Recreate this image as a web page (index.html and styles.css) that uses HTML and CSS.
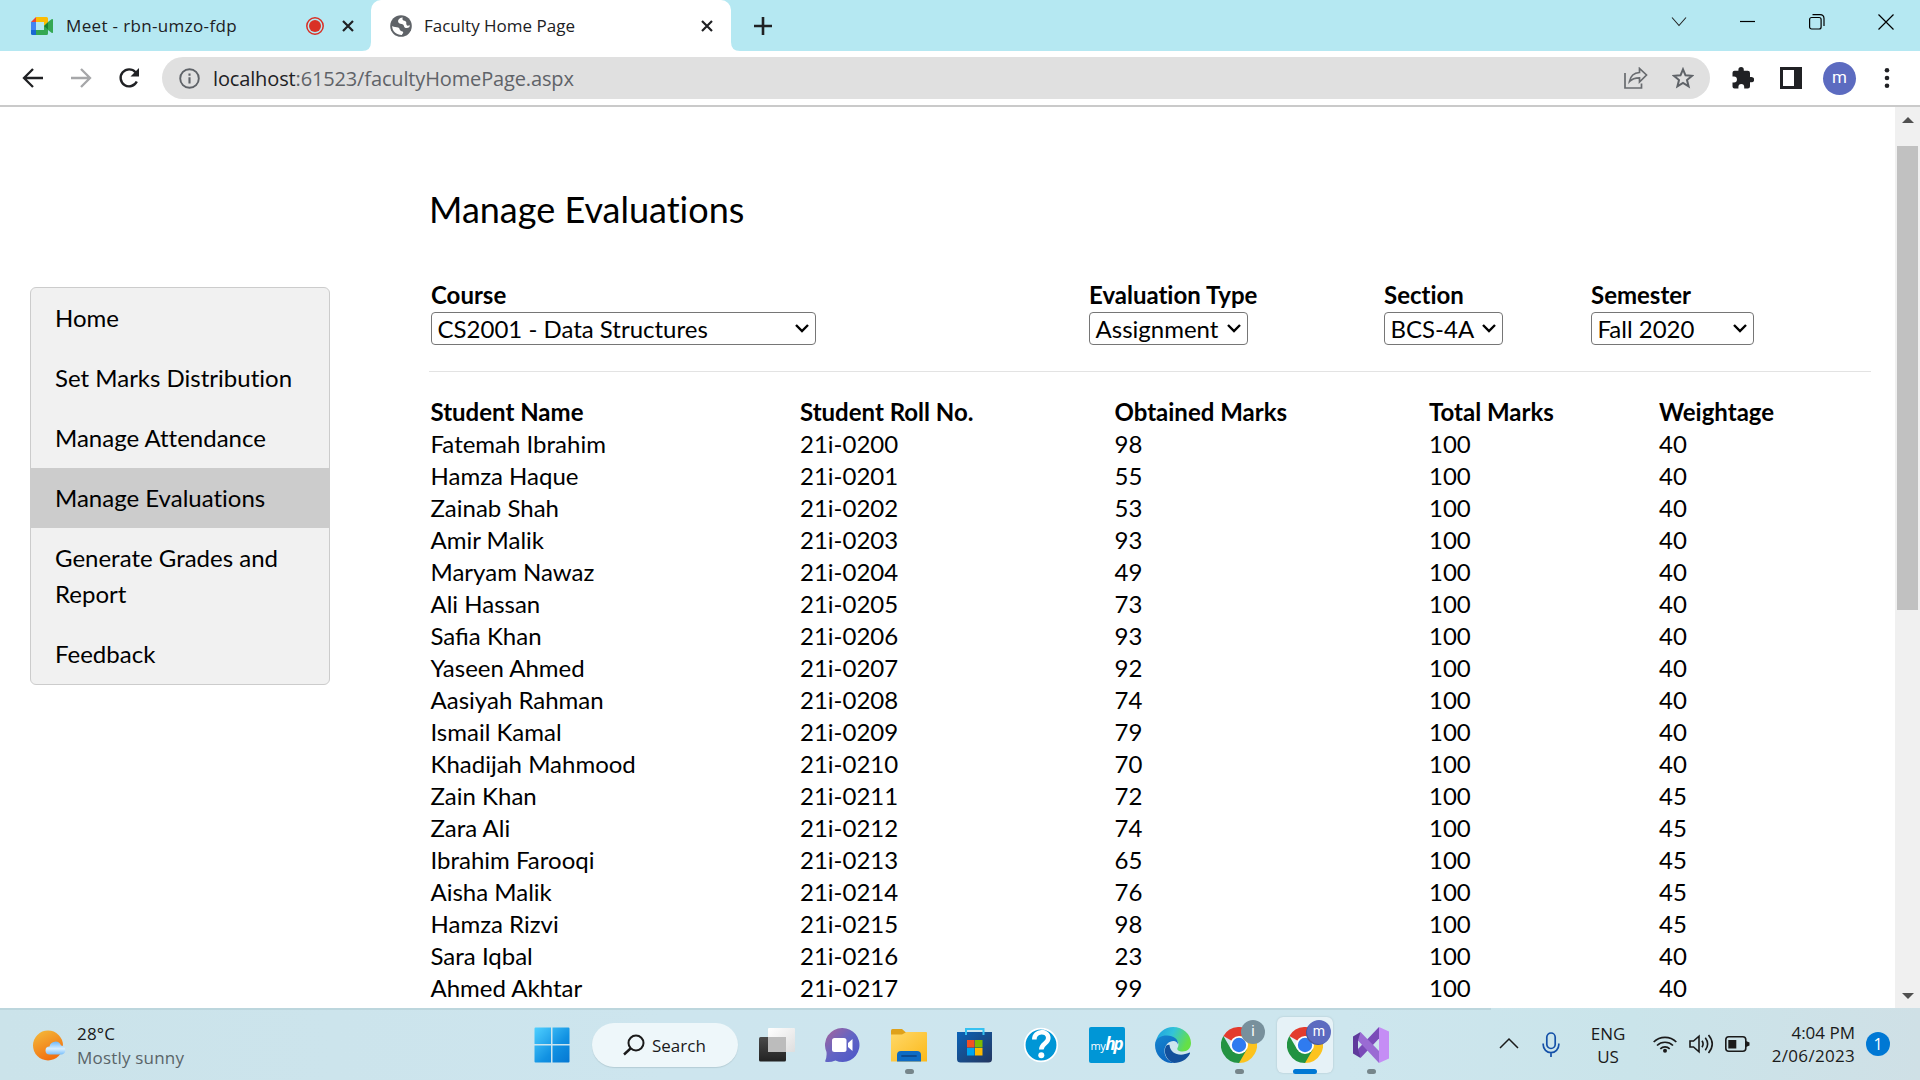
FILE: index.html
```html
<!DOCTYPE html>
<html lang="en">
<head>
<meta charset="utf-8">
<title>Faculty Home Page</title>
<link rel="stylesheet" href="styles.css">
</head>
<body>
<header class="tabstrip">
  <div class="tab tab-idle">
    <svg class="meet" width="22" height="18" viewBox="0 0 22 18"><path d="M0 5 5 0v5z" fill="#ea4335"/><path d="M5 0h10.500q1.500 0 1.500 1.500V7l-4 2V5H5z" fill="#fbbc04"/><path d="M0 5h5v8H0z" fill="#4285f4"/><path d="M0 13h5v5H1.500Q0 18 0 16.500z" fill="#1967d2"/><path d="M5 13h8V9l4-4v11.500q0 1.500-1.500 1.500H5z" fill="#34a853"/><path d="M17 5l3.500-2.800q1.500-.8 1.500.5v12.600q0 1.300-1.500.5L17 13z" fill="#34a853"/><path d="M13 9l4-3.500v7z" fill="#188038"/></svg>
    <span class="tab-title meet-title">Meet - rbn-umzo-fdp</span>
    <svg class="rec" width="18" height="18" viewBox="0 0 18 18"><circle cx="9" cy="9" r="8.200" fill="none" stroke="#d93025" stroke-width="1.500"/><circle cx="9" cy="9" r="6" fill="#d93025"/></svg>
    <svg class="tab-x" width="12" height="12" viewBox="0 0 12 12"><path d="M1 1l10 10M11 1L1 11" stroke="#202124" stroke-width="2.200"/></svg>
  </div>
  <div class="tab tab-active">
    <svg class="foot foot-left" width="9" height="9" viewBox="0 0 9 9"><path d="M9 0v9H0Q9 9 9 0z" fill="#fff"/></svg>
    <svg class="foot foot-right" width="9" height="9" viewBox="0 0 9 9"><path d="M0 0v9h9Q0 9 0 0z" fill="#fff"/></svg>
    <svg width="22" height="22" viewBox="0 0 22 22"><circle cx="11" cy="11" r="10.800" fill="#5f6368"/><path d="M12.500 2.300C9.500 3.200 7.500 5 8.300 7.200c.7 1.800 3.200 1.500 4.700 2.300 1.300.8.700 2.700 2 3.200 1.500.6 3.200.3 4.500-.7l.2-2c-1.200 1-2.700 1-3.200-.2-.7-1.600.5-2.500-1-3.500-1.200-.8-3-.8-3-2zM2.200 11c2 1.500 4 .8 6 1.500 2 .8 1 2.500 2.500 3.300 1.300.6 2.500.7 2.500 1.700 0 1-1.200 1.500-1.200 2.500C7 20.200 2 16.500 2.200 11z" fill="#fff"/></svg>
    <span class="tab-title page-title">Faculty Home Page</span>
    <svg class="tab-x" width="12" height="12" viewBox="0 0 12 12"><path d="M1 1l10 10M11 1L1 11" stroke="#202124" stroke-width="2.200"/></svg>
  </div>
  <svg class="newtab" width="18" height="18" viewBox="0 0 18 18"><path d="M9 0v18M0 9h18" stroke="#202124" stroke-width="2.600"/></svg>
  <div class="winctl">
    <svg width="16" height="16" viewBox="0 0 16 16"><path d="M1 3.500l7 8 7-8" fill="none" stroke="#222" stroke-width="1.100"/></svg>
    <svg width="16" height="16" viewBox="0 0 16 16"><path d="M0 7.500h15" stroke="#000" stroke-width="1.200"/></svg>
    <svg width="16" height="16" viewBox="0 0 16 16"><rect x=".6" y="3.500" width="11.500" height="11.500" rx="2" fill="none" stroke="#000" stroke-width="1.200"/><path d="M3.500.6h7.500q4 0 4 4V12" fill="none" stroke="#000" stroke-width="1.200"/></svg>
    <svg width="16" height="16" viewBox="0 0 16 16"><path d="M.5.5l15 15M15.500.5l-15 15" stroke="#000" stroke-width="1.200"/></svg>
  </div>
</header>

<nav class="toolbar">
  <svg class="nav-ico" width="22" height="22" viewBox="0 0 22 22"><path d="M21 11H2.500M11 2l-9 9 9 9" fill="none" stroke="#202124" stroke-width="2.300"/></svg>
  <svg class="nav-ico" width="22" height="22" viewBox="0 0 22 22"><path d="M1 11h18.500M11 2l9 9-9 9" fill="none" stroke="#a6a7a9" stroke-width="2.300"/></svg>
  <svg class="nav-ico" width="22" height="22" viewBox="0 0 22 22"><path d="M18.800 14.500A8.500 8.500 0 1 1 17.500 5.200" fill="none" stroke="#202124" stroke-width="2.400"/><path d="M21 1v8.500h-8.500z" fill="#202124"/></svg>
  <div class="omnibox">
    <svg class="info" width="21" height="21" viewBox="0 0 21 21"><circle cx="10.500" cy="10.500" r="9.300" fill="none" stroke="#5f6368" stroke-width="1.900"/><path d="M10.500 9.200v6.300M10.500 5.500v2.200" stroke="#5f6368" stroke-width="2.100"/></svg>
    <span class="url"><span class="host">localhost</span>:61523/facultyHomePage.aspx</span>
    <svg class="share" width="24" height="22" viewBox="0 0 24 22"><path d="M1 6v15h16.500v-4.500" fill="none" stroke="#686b6f" stroke-width="1.700"/><path d="M5.500 14.500C6.500 9 10 5.800 15.500 5.500V1.500L22.500 8l-7 7v-4.200c-4 0-7.500 1-10 3.700z" fill="none" stroke="#686b6f" stroke-width="1.700"/></svg>
    <svg class="star" width="22" height="22" viewBox="0 0 22 22"><path d="M11 2.300l2.500 6 6.500.5-5 4.200 1.600 6.400L11 16l-5.600 3.400L7 13 2 8.800l6.500-.5z" fill="none" stroke="#5f6368" stroke-width="2"/></svg>
  </div>
  <svg class="puzzle" width="22" height="22" viewBox="0 0 22 22"><path d="M19.500 10H18V6q0-2.200-2.200-2.200h-4V2.700a2.700 2.700 0 0 0-5.400 0v1.100H2.500Q.5 3.800.5 5.800v3.800H2a2.900 2.900 0 0 1 0 5.900H.5v4Q.5 21.500 2.500 21.500h3.900V20a2.900 2.900 0 0 1 5.800 0v1.500h3.600q2.200 0 2.200-2.200v-4h1.500a2.650 2.650 0 0 0 0-5.300z" fill="#202124"/></svg>
  <svg class="panel" width="22" height="22" viewBox="0 0 22 22"><rect x="1.500" y="1.500" width="19" height="19" fill="#fff" stroke="#202124" stroke-width="3"/><path d="M14 1h7v20h-7z" fill="#202124"/></svg>
  <span class="avatar">m</span>
  <svg class="dots" width="6" height="22" viewBox="0 0 6 22"><g fill="#202124"><circle cx="3" cy="3.300" r="2.300"/><circle cx="3" cy="11" r="2.300"/><circle cx="3" cy="18.700" r="2.300"/></g></svg>
</nav>

<div class="viewport">
  <aside class="sidebar">
    <a class="side-link">Home</a>
    <a class="side-link">Set Marks Distribution</a>
    <a class="side-link">Manage Attendance</a>
    <a class="side-link current">Manage Evaluations</a>
    <a class="side-link">Generate Grades and Report</a>
    <a class="side-link">Feedback</a>
  </aside>
  <main class="main">
    <h1 class="heading">Manage Evaluations</h1>
    <div class="filters">
      <div class="field"><label>Course</label><div class="select w-course">CS2001 - Data Structures<svg width="14" height="9" viewBox="0 0 14 9"><path d="M1 1l6 6 6-6" fill="none" stroke="#000" stroke-width="2.400"/></svg></div></div>
      <div class="field"><label>Evaluation Type</label><div class="select w-type">Assignment<svg width="14" height="9" viewBox="0 0 14 9"><path d="M1 1l6 6 6-6" fill="none" stroke="#000" stroke-width="2.400"/></svg></div></div>
      <div class="field"><label>Section</label><div class="select w-section">BCS-4A<svg width="14" height="9" viewBox="0 0 14 9"><path d="M1 1l6 6 6-6" fill="none" stroke="#000" stroke-width="2.400"/></svg></div></div>
      <div class="field"><label>Semester</label><div class="select w-semester">Fall 2020<svg width="14" height="9" viewBox="0 0 14 9"><path d="M1 1l6 6 6-6" fill="none" stroke="#000" stroke-width="2.400"/></svg></div></div>
    </div>
    <hr class="rule">
    <table class="marks">
      <colgroup><col class="c1"><col class="c2"><col class="c3"><col class="c4"><col class="c5"></colgroup>
      <thead><tr><th>Student Name</th><th>Student Roll No.</th><th>Obtained Marks</th><th>Total Marks</th><th>Weightage</th></tr></thead>
      <tbody>
        <tr><td>Fatemah Ibrahim</td><td>21i-0200</td><td>98</td><td>100</td><td>40</td></tr>
        <tr><td>Hamza Haque</td><td>21i-0201</td><td>55</td><td>100</td><td>40</td></tr>
        <tr><td>Zainab Shah</td><td>21i-0202</td><td>53</td><td>100</td><td>40</td></tr>
        <tr><td>Amir Malik</td><td>21i-0203</td><td>93</td><td>100</td><td>40</td></tr>
        <tr><td>Maryam Nawaz</td><td>21i-0204</td><td>49</td><td>100</td><td>40</td></tr>
        <tr><td>Ali Hassan</td><td>21i-0205</td><td>73</td><td>100</td><td>40</td></tr>
        <tr><td class="lig">Safia Khan</td><td>21i-0206</td><td>93</td><td>100</td><td>40</td></tr>
        <tr><td>Yaseen Ahmed</td><td>21i-0207</td><td>92</td><td>100</td><td>40</td></tr>
        <tr><td>Aasiyah Rahman</td><td>21i-0208</td><td>74</td><td>100</td><td>40</td></tr>
        <tr><td>Ismail Kamal</td><td>21i-0209</td><td>79</td><td>100</td><td>40</td></tr>
        <tr><td>Khadijah Mahmood</td><td>21i-0210</td><td>70</td><td>100</td><td>40</td></tr>
        <tr><td>Zain Khan</td><td>21i-0211</td><td>72</td><td>100</td><td>45</td></tr>
        <tr><td>Zara Ali</td><td>21i-0212</td><td>74</td><td>100</td><td>45</td></tr>
        <tr><td>Ibrahim Farooqi</td><td>21i-0213</td><td>65</td><td>100</td><td>45</td></tr>
        <tr><td>Aisha Malik</td><td>21i-0214</td><td>76</td><td>100</td><td>45</td></tr>
        <tr><td>Hamza Rizvi</td><td>21i-0215</td><td>98</td><td>100</td><td>45</td></tr>
        <tr><td>Sara Iqbal</td><td>21i-0216</td><td>23</td><td>100</td><td>40</td></tr>
        <tr><td>Ahmed Akhtar</td><td>21i-0217</td><td>99</td><td>100</td><td>40</td></tr>
      </tbody>
    </table>
  </main>
  <div class="scrollbar">
    <svg width="12" height="6" viewBox="0 0 12 6"><path d="M0 6l6-6 6 6z" fill="#505050"/></svg>
    <div class="thumb"></div>
    <svg width="12" height="6" viewBox="0 0 12 6"><path d="M0 0l6 6 6-6z" fill="#505050"/></svg>
  </div>
</div>

<footer class="taskbar">
  <div class="weather">
    <svg width="34" height="32" viewBox="0 0 34 32"><defs><linearGradient id="sun" x1="0" y1="0" x2=".5" y2="1"><stop offset="0" stop-color="#f4bd3d"/><stop offset="1" stop-color="#f2700f"/></linearGradient><linearGradient id="cld" x1="0" y1="0" x2="0" y2="1"><stop offset="0" stop-color="#6fb9f8"/><stop offset=".55" stop-color="#d8efff"/><stop offset="1" stop-color="#7cc0fa"/></linearGradient></defs><circle cx="15" cy="15.500" r="15" fill="url(#sun)"/><path d="M16.500 24.500a4 4 0 0 1 0-8 6 6 0 0 1 11.500-1 4.600 4.600 0 0 1 1 9z" fill="url(#cld)"/></svg>
    <div class="weather-text"><span>28°C</span><span class="muted">Mostly sunny</span></div>
  </div>
  <div class="apps">
    <svg class="start" width="36" height="36" viewBox="0 0 36 36"><defs><linearGradient id="win" x1="0" y1="0" x2="1" y2="1"><stop offset="0" stop-color="#4fd0ff"/><stop offset=".6" stop-color="#1191e2"/><stop offset="1" stop-color="#0577d2"/></linearGradient></defs><path d="M1.500.5H17v16.500H.5V1.500q0-1 1-1zM18.500.5h16q1 0 1 1V17h-17zM.5 18.500H17v17H1.500q-1 0-1-1zM18.500 18.500h17v16q0 1-1 1h-16z" fill="url(#win)"/></svg>
    <div class="search"><svg width="22" height="22" viewBox="0 0 22 22"><circle cx="13" cy="9" r="7.500" fill="none" stroke="#1a1a1a" stroke-width="2"/><path d="M7.500 14.500L1 20.500" stroke="#1a1a1a" stroke-width="2.400"/></svg><span>Search</span></div>
    <div class="app"><svg width="36" height="36" viewBox="0 0 36 36"><defs><linearGradient id="tv1" x1="0" y1="0" x2="0" y2="1"><stop offset="0" stop-color="#4a4a4a"/><stop offset="1" stop-color="#222"/></linearGradient><linearGradient id="tv2" x1="0" y1="0" x2="1" y2="1"><stop offset="0" stop-color="#fff"/><stop offset="1" stop-color="#dedede"/></linearGradient></defs><rect x="0" y="10" width="27" height="24.500" rx="1.500" fill="url(#tv1)"/><rect x="9" y="1" width="27" height="24" rx="1" fill="url(#tv2)"/><path d="M9 10h18v15H9z" fill="#bcbcbc"/></svg></div>
    <div class="app"><svg width="36" height="36" viewBox="0 0 36 36"><defs><linearGradient id="chat" x1="0" y1="0" x2="1" y2="1"><stop offset="0" stop-color="#a9649a"/><stop offset=".5" stop-color="#6264c4"/><stop offset="1" stop-color="#4a55c8"/></linearGradient></defs><path d="M17.500 1a17 17 0 1 1-7 32.500Q4 36 0 34.500q2-4 1.500-9.500A17 17 0 0 1 17.500 1z" fill="url(#chat)"/><rect x="7" y="11" width="14.500" height="14" rx="2.500" fill="#fff"/><path d="M23 16l4.500-4v12L23 20z" fill="#fff"/></svg></div>
    <div class="app"><svg width="36" height="36" viewBox="0 0 36 36"><defs><linearGradient id="fold" x1="0" y1="0" x2="1" y2="1"><stop offset="0" stop-color="#ffd869"/><stop offset="1" stop-color="#fbb91a"/></linearGradient></defs><path d="M0 3.500Q0 2 1.500 2H11l4.500 4v4H0z" fill="#dfa11a"/><path d="M0 7.500h11L15.500 5H35q1 0 1 1v28.500H0z" fill="url(#fold)"/><path d="M6 34.500V28q0-4 4-4h16q4 0 4 4v6.500z" fill="#0d6bc4"/><path d="M11 29h14" stroke="#0a4b92" stroke-width="1.800" stroke-linecap="round"/></svg><i class="run"></i></div>
    <div class="app"><svg width="36" height="36" viewBox="0 0 36 36"><defs><linearGradient id="store" x1="0" y1="0" x2="1" y2="1"><stop offset="0" stop-color="#0b63b8"/><stop offset="1" stop-color="#24365f"/></linearGradient></defs><path d="M0 5h35v27q0 3.500-3.500 3.500h-28Q0 35.500 0 32z" fill="url(#store)"/><path d="M9 8V2h17.500v6" fill="none" stroke="#35c1f1" stroke-width="2"/><path d="M10 13h7.500v7.500H10z" fill="#f25022"/><path d="M18 13h7.500v7.500H18z" fill="#7fba00"/><path d="M10 21h7.500v7.500H10z" fill="#00a4ef"/><path d="M18 21h7.500v7.500H18z" fill="#ffb900"/></svg></div>
    <div class="app"><svg width="36" height="36" viewBox="0 0 36 36"><circle cx="18" cy="18" r="16.300" fill="#0096d6" stroke="#fff" stroke-width="1.700"/><path d="M11.300 12.500c0-9.500 14-9.500 14-1.500 0 5.500-7 5.500-7 11.500" fill="none" stroke="#fff" stroke-width="4.600"/><circle cx="18.300" cy="28.300" r="3" fill="#fff"/></svg></div>
    <div class="app"><div class="hp"><span class="my">my</span><b>hp</b></div></div>
    <div class="app"><svg width="36" height="36" viewBox="0 0 36 36"><defs><linearGradient id="e1" x1="0" y1="0" x2="1" y2=".35"><stop offset="0" stop-color="#1b9de2"/><stop offset=".5" stop-color="#33c3d9"/><stop offset="1" stop-color="#65e046"/></linearGradient><linearGradient id="e2" x1="0" y1="0" x2=".5" y2="1"><stop offset="0" stop-color="#1686d0"/><stop offset="1" stop-color="#0c64bd"/></linearGradient></defs><path d="M1 14A17.500 17.500 0 0 1 18 0c10 0 18 7 18 16 0 5-3.500 8.500-8.500 8.500-4 0-6-1.800-5-3.500 3-5-1-9.500-7-10Q6 9 1 14z" fill="url(#e1)"/><path d="M0 18C0 11 6 8.500 12 8.500c7 0 11.500 4 11 9q-1-3.500-4.500-3.500c-4.500 0-9 4-9 10s4 10.500 10 12C9 37 0 29 0 18z" fill="url(#e2)"/><path d="M11 19c-3 6 0 14.500 8 17 7 0 13-3.500 16-9.500q.3-1.300-1-.7c-8.500 4-19 1.500-19.500-8-1 0-2.500 0-3.500 1.200z" fill="#12509c"/></svg></div>
    <div class="app"><svg width="36" height="36" viewBox="0 0 36 36"><path d="M18 18L2.400 9A18 18 0 0 1 33.600 9z" fill="#e33b2e"/><path d="M18 18V9h15.600A18 18 0 0 1 18 36z" fill="#fcc31e"/><path d="M2.400 9L10.200 22.500 25.800 22.500 18 36A18 18 0 0 1 2.400 9z" fill="#229342"/><circle cx="18" cy="18" r="9" fill="#fff"/><circle cx="18" cy="18" r="7.200" fill="#2f7bf0"/></svg><span class="badge badge-grey">i</span><i class="run"></i></div>
    <div class="app app-on"><svg width="36" height="36" viewBox="0 0 36 36"><path d="M18 18L2.400 9A18 18 0 0 1 33.600 9z" fill="#e33b2e"/><path d="M18 18V9h15.600A18 18 0 0 1 18 36z" fill="#fcc31e"/><path d="M2.400 9L10.200 22.500 25.800 22.500 18 36A18 18 0 0 1 2.400 9z" fill="#229342"/><circle cx="18" cy="18" r="9" fill="#fff"/><circle cx="18" cy="18" r="7.200" fill="#2f7bf0"/></svg><span class="badge badge-blue">m</span><i class="run run-on"></i></div>
    <div class="app"><svg width="36" height="36" viewBox="0 0 36 36"><path d="M0 9.500L7.500 5v7.500L5 14v8l2.500 2v7L0 26.500z" fill="#5f3a9c"/><path d="M7.500 31L26 11.500V0L5 22z" fill="#7a4bb8"/><path d="M7.500 5L26 24v12L5 13.500z" fill="#9a6bd3"/><path d="M26 0l10 4.500v27L26 36z" fill="#c58df5"/></svg><i class="run"></i></div>
  </div>
  <div class="tray">
    <svg class="up" width="20" height="12" viewBox="0 0 20 12"><path d="M1 11l9-9 9 9" fill="none" stroke="#1a1a1a" stroke-width="1.500"/></svg>
    <svg class="mic" width="18" height="26" viewBox="0 0 18 26"><rect x="4.800" y="1" width="8.400" height="15.500" rx="4.200" fill="none" stroke="#1450a8" stroke-width="1.700"/><path d="M1.200 11.500v1.300a7.800 7.800 0 0 0 15.600 0v-1.300M9 20.500V25" fill="none" stroke="#1450a8" stroke-width="1.700"/></svg>
    <div class="lang"><span>ENG</span><span>US</span></div>
    <svg class="wifi" width="24" height="18" viewBox="0 0 24 18"><g fill="none" stroke="#1a1a1a" stroke-width="1.700"><path d="M.7 7a16 16 0 0 1 22.600 0"/><path d="M4 10.500a11.500 11.500 0 0 1 16 0"/><path d="M7.300 13.800a6.800 6.800 0 0 1 9.400 0"/></g><circle cx="12" cy="15.800" r="2" fill="#1a1a1a"/></svg>
    <svg class="spk" width="25" height="20" viewBox="0 0 25 20"><path d="M1 7h3.500L10 2.200v15.600L4.500 13H1z" fill="none" stroke="#1a1a1a" stroke-width="1.600"/><path d="M13 6.800q2.200 3.200 0 6.400M16.300 3.800q4.700 6.200 0 12.400M19.500 1q7.500 9 0 18" fill="none" stroke="#1a1a1a" stroke-width="1.600"/></svg>
    <svg class="bat" width="25" height="16" viewBox="0 0 25 16"><rect x=".8" y=".8" width="20" height="14.400" rx="3" fill="none" stroke="#1a1a1a" stroke-width="1.600"/><path d="M3.300 4h8v8.500h-8z" fill="#1a1a1a"/><path d="M21 5l3.500 1.500v3L21 11z" fill="#1a1a1a"/></svg>
    <div class="clock"><span class="time">4:04 PM</span><span class="date">2/06/2023</span></div>
    <span class="note">1</span>
  </div>
</footer>
</body>
</html>
```
FILE: styles.css
```css
* { box-sizing: border-box; }
body {
  margin: 0;
  width: 1920px;
  height: 1080px;
  overflow: hidden;
  display: flex;
  flex-direction: column;
  background: #fff;
  color: #000;
  font-family: "Open Sans", "Noto Sans", sans-serif;
}
svg { display: block; flex: none; }

/* Tab strip */
.tabstrip {
  height: 51px;
  flex: none;
  display: flex;
  align-items: center;
  background: #b5e8f2;
}
.tab { display: flex; align-items: center; height: 51px; }
.tab-idle { width: 371px; padding: 0 17px 0 31px; }
.tab-active {
  position: relative;
  width: 360px;
  padding: 0 18px 0 19px;
  background: #fff;
  border-radius: 10px 10px 0 0;
}
.foot { position: absolute; bottom: 0; }
.foot-left { left: -9px; }
.foot-right { right: -9px; }
.tab-title {
  margin-left: 13px;
  flex: 1;
  font-size: 17px;
  white-space: nowrap;
  color: #202124;
}
.meet-title { letter-spacing: 0.35px; }
.page-title { margin-left: 12px; }
.rec { margin-right: 18px; }
.newtab { margin-left: 23px; }
.winctl {
  margin-left: auto;
  margin-right: 26.500px;
  margin-bottom: 8px;
  display: flex;
  gap: 53px;
}

/* Toolbar */
.toolbar {
  height: 56px;
  flex: none;
  display: flex;
  align-items: center;
  padding: 0 30px 0 22px;
  border-bottom: 2px solid #cacaca;
}
.nav-ico { margin-right: 26px; }
.omnibox {
  width: 1548px;
  height: 42px;
  margin-left: -4px;
  display: flex;
  align-items: center;
  padding: 0 16px 0 17px;
  border-radius: 21px;
  background: #e0e0e0;
}
.url {
  flex: 1;
  margin-left: 13px;
  font-size: 20px;
  letter-spacing: -0.14px;
  color: #5f6368;
}
.host { color: #202124; }
.share { margin-right: 24px; }
.puzzle { margin-left: 22px; }
.panel { margin-left: 26px; }
.avatar {
  width: 33px;
  height: 33px;
  margin-left: 21px;
  border-radius: 50%;
  background: #5c6bc0;
  color: #fff;
  font: 17px/31px Roboto, sans-serif;
  text-align: center;
}
.dots { margin-left: 28px; }

/* Page */
.viewport {
  height: 901px;
  flex: none;
  display: flex;
  align-items: flex-start;
  overflow: hidden;
  font-family: Lato, sans-serif;
  font-size: 24px;
  font-variant-ligatures: no-common-ligatures;
}
.lig { font-variant-ligatures: normal; }
.sidebar {
  width: 300px;
  margin: 180px 99px 0 30px;
  flex: none;
  border: 1px solid #ccc;
  border-radius: 6px;
  background: #f1f1f1;
}
.side-link {
  display: block;
  padding: 12px 24px;
  line-height: 36px;
}
.current { background: #ccc; }
.main { width: 1442px; padding-top: 81px; flex: none; }
.heading {
  margin: 0;
  font-size: 36px;
  line-height: 43px;
  font-weight: 400;
}
.filters {
  display: grid;
  grid-template-columns: 658px 295px 207px 1fr;
  margin-top: 48px;
  padding-left: 2px;
}
.field label {
  display: block;
  line-height: 32px;
  margin-bottom: 1px;
  font-weight: 700;
}
.select {
  display: flex;
  align-items: center;
  justify-content: space-between;
  height: 33px;
  padding: 0 6px 1px 5.500px;
  border: 1px solid #767676;
  border-radius: 4px;
  white-space: nowrap;
}
.w-course { width: 385px; }
.w-type { width: 159px; }
.w-section { width: 119px; }
.w-semester { width: 163px; }
.rule {
  margin: 26px 0 23px;
  height: 1px;
  border: 0;
  background: #e3e3e3;
}
.marks {
  width: 1442px;
  table-layout: fixed;
  border-collapse: collapse;
  text-align: left;
}
.marks th, .marks td { padding: 0 0 0 1.5px; height: 32px; line-height: 32px; }
.marks th { height: 33px; padding-top: 1px; }
.c1 { width: 369.5px; }
.c2 { width: 314.5px; }
.c3 { width: 314.5px; }
.c4 { width: 230px; }
.scrollbar {
  width: 25px;
  height: 901px;
  margin-left: auto;
  display: flex;
  flex-direction: column;
  align-items: center;
  padding: 10px 0 9px;
  background: #f0f0f0;
}
.thumb {
  width: 21px;
  height: 464px;
  margin: 23px 0 auto;
  background: #c1c1c1;
}

/* Taskbar */
.taskbar {
  position: relative;
  height: 72px;
  flex: none;
  display: flex;
  background: linear-gradient(90deg, #cbe3ea, #cde5ee 35%, #cde6ee 70%, #cae4ea 85%, #cfe0e6);
  font-size: 17px;
  color: #1a1a1a;
}
.taskbar::before {
  content: "";
  position: absolute;
  left: 0;
  top: 0;
  width: 1491px;
  height: 2px;
  background: #bcd6dd;
}
.weather { width: 534px; display: flex; padding: 22px 0 0 33px; gap: 10px; }
.weather-text, .lang, .clock { display: flex; flex-direction: column; line-height: 24px; margin-top: -8px; white-space: nowrap; }
.weather-text { letter-spacing: 0.2px; }
.muted { color: #5a6468; }
.apps { display: flex; align-items: center; }
.start { margin-right: 22px; margin-top: 2px; }
.search {
  display: flex;
  align-items: center;
  gap: 7px;
  width: 146px;
  height: 44px;
  margin-right: 6px;
  padding-left: 31px;
  margin-top: 2px;
  border-radius: 22px;
  background: #eef7fa;
  box-shadow: 0 1px 1px #b5cdd5;
}
.app {
  position: relative;
  width: 66px;
  height: 72px;
  display: flex;
  align-items: center;
  justify-content: center;
  padding-top: 2px;
}
.app > svg, .hp { position: relative; }
.app-on::before {
  content: "";
  position: absolute;
  left: 5px;
  top: 9px;
  width: 56px;
  height: 56px;
  border-radius: 6px;
  background: #e6f2f7;
  box-shadow: 0 0 2px #a9bfc7;
}
.run {
  position: absolute;
  left: 28.500px;
  bottom: 6px;
  width: 9px;
  height: 5px;
  border-radius: 3px;
  background: #76868b;
}
.run-on { left: 21px; width: 24px; background: #0078d4; }
.badge {
  position: absolute;
  left: 35px;
  top: 12px;
  width: 24px;
  height: 24px;
  border-radius: 50%;
  color: #fff;
  font: 14px/22px Roboto, sans-serif;
  text-align: center;
}
.badge-grey { background: #78909c; }
.badge-blue { background: #5c6bc0; box-shadow: -1px 1px 0 #4657a0; }
.hp {
  width: 36px;
  height: 36px;
  border-radius: 2px;
  background: #0096d6;
  color: #fff;
  display: flex;
  align-items: center;
  justify-content: center;
  font-size: 11px;
  letter-spacing: -0.5px;
}
.hp b { font-size: 17px; line-height: 20px; font-style: italic; letter-spacing: -2px; padding: 0 2px 3px 0; }
.tray { flex: 1; display: flex; }
.up { margin: 29px 0 0 95px; }
.mic { margin: 24px 0 0 23px; }
.lang { width: 60px; margin: 13.500px 0 0 18px; text-align: center; line-height: 23px; }
.wifi { margin: 27px 0 0 15px; }
.spk { margin: 26px 0 0 12px; }
.bat { margin: 28px 0 0 11px; }
.clock { width: 105px; margin-top: 12.500px; text-align: right; line-height: 23px; }
.date { letter-spacing: 0.3px; }
.note {
  width: 24px;
  height: 24px;
  margin: 24px 0 0 11px;
  border-radius: 50%;
  background: #0078d4;
  color: #fff;
  font-size: 16px;
  line-height: 24px;
  text-align: center;
}
```
